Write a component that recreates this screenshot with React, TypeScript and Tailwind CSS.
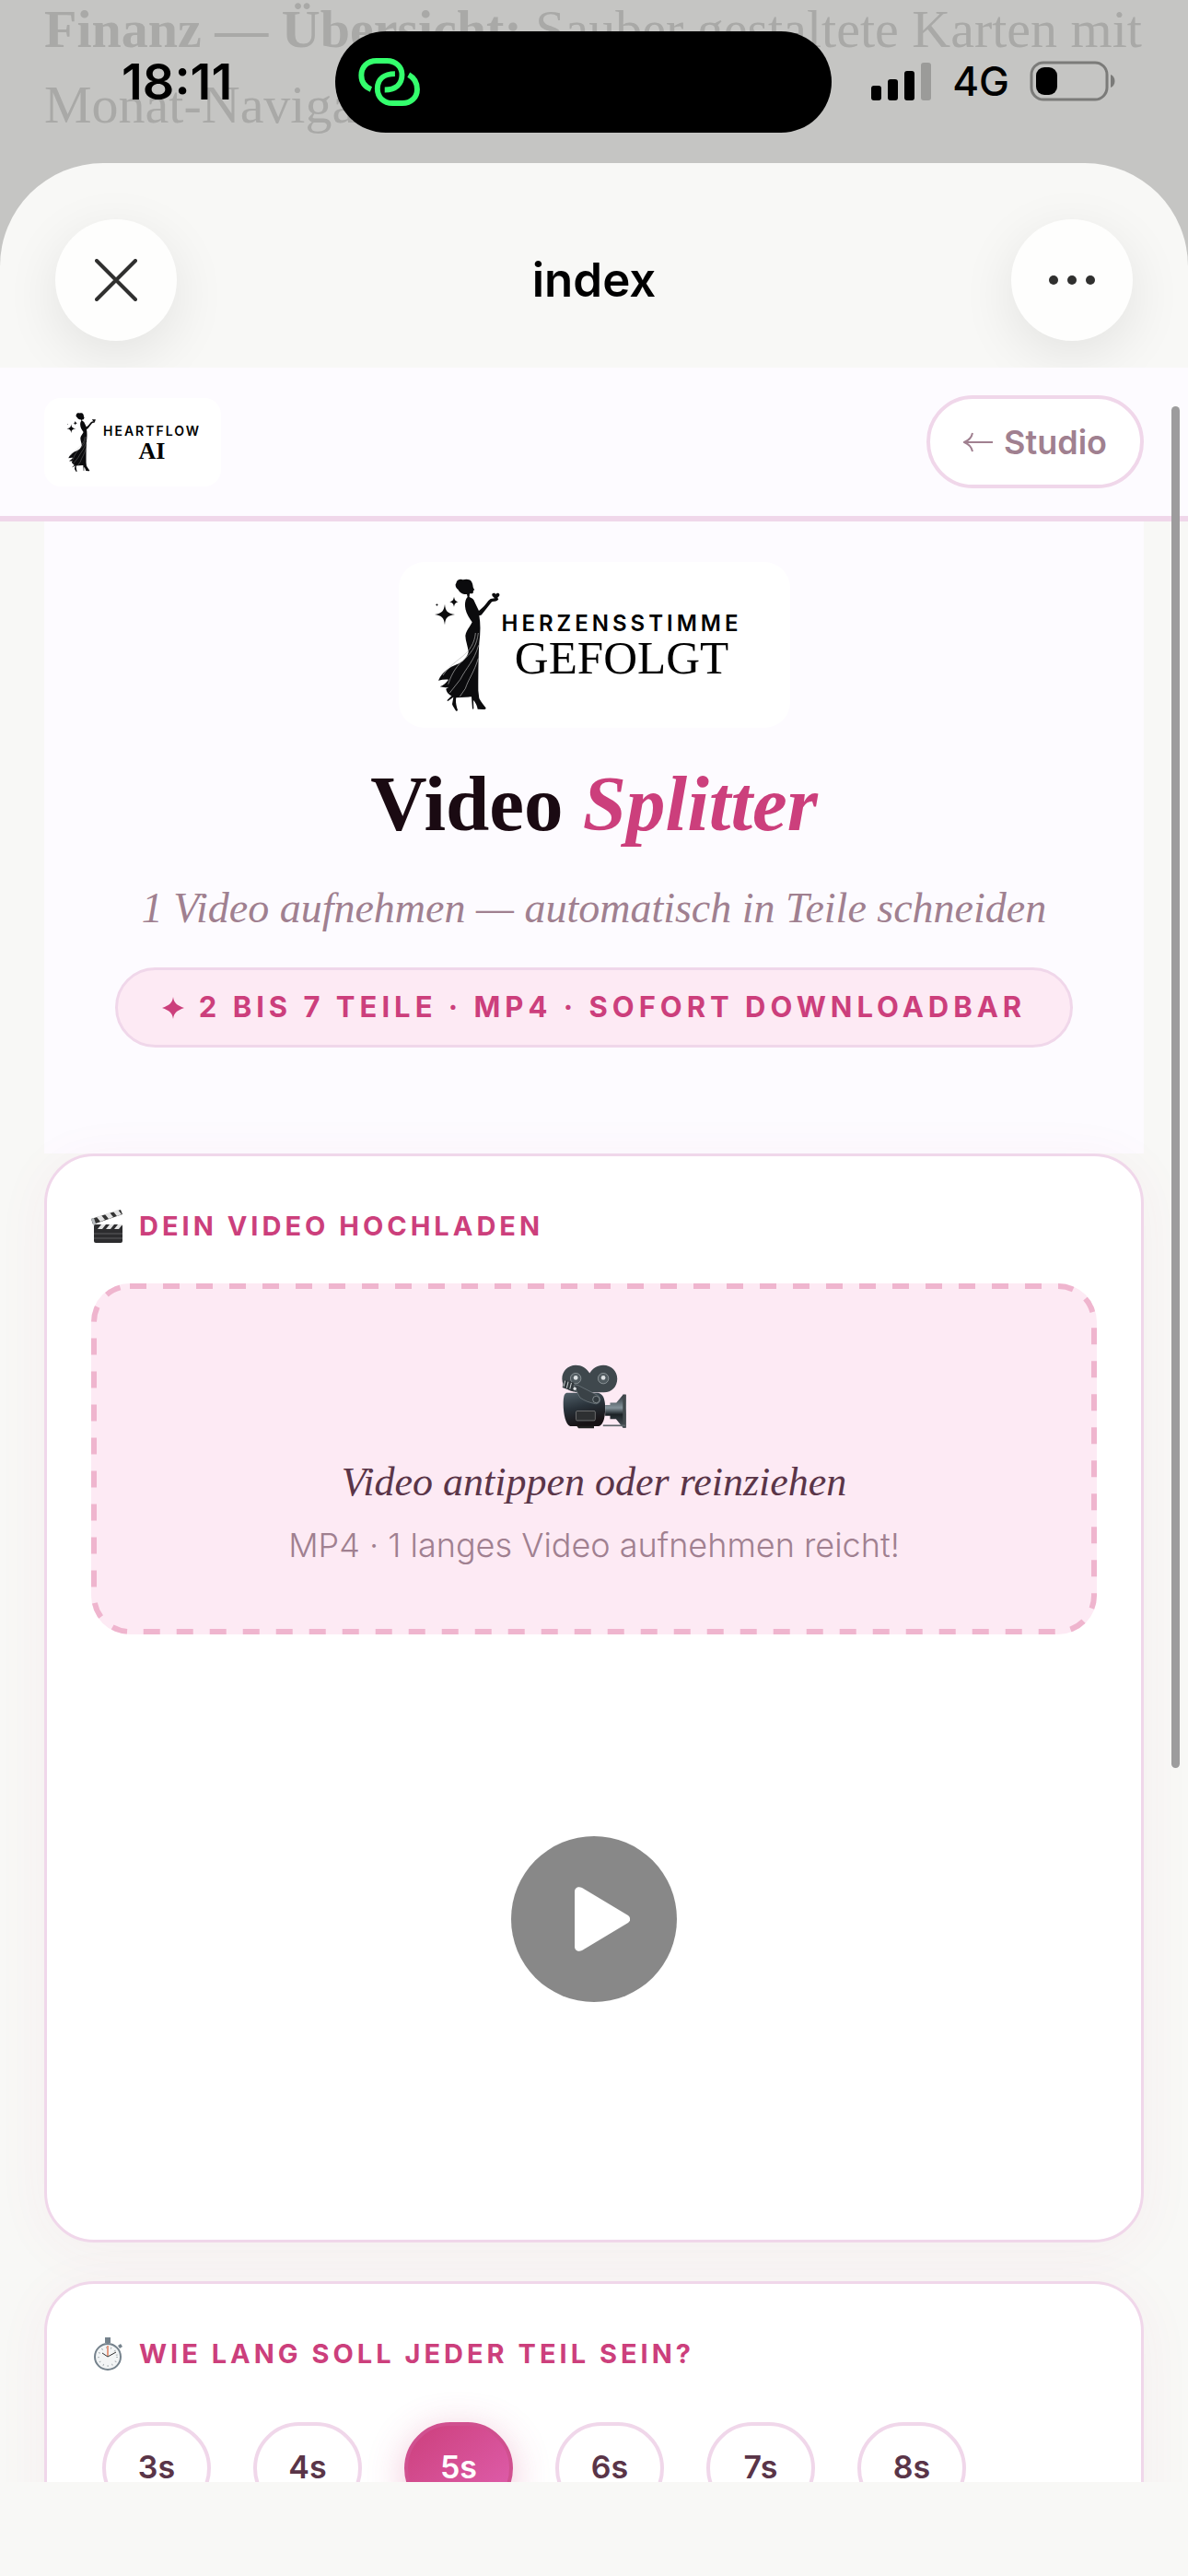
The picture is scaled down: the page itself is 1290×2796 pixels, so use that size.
import { useState } from 'react';
import { clsx } from 'clsx';

const DURATIONS = ['3s', '4s', '5s', '6s', '7s', '8s'];

const sans = "font-[Inter,'Open_Sans',sans-serif]";
const serif = "font-['Liberation_Serif',serif]";

function Lady({ className }: { className?: string }) {
  return (
    <svg viewBox="155 80 222 442" className={className} fill="#0b0b0d" aria-hidden="true">
      <path d="M228 100c2-11 13-15 22-11 11-4 25-2 29 8 4 7 3 13 5 19l4 6-4 2-1 8c-3 3-8 1-11 2l-1 11c9 3 15 8 18 18l13 27c12-9 22-20 31-33l7-6c4-1 14-3 22-4l4 5c-4 8-14 7-22 9l-32 40c-2 3-6 4-9 4 5 29 4 58 0 90-3 55-3 110-3 155l3 25c5 10 13 20 21 30 3 4-3 7-8 6l-18-1c-2-11-7-22-14-29l1 28-4 1-3-40-50 3c-3 13 1 28 5 40-1 4-4 5-7 1-4-8-9-12-11-20l4-23-18 13-3-2 15-15c-8-4-17-12-18-23l9-6c-10 3-20 1-29-1 12-5 21-13 28-23-10-1-22 0-33 3 12-28 38-44 59-52 22-9 33-22 39-40-1-18-10-37-10-54 2-17 15-28 22-44-10-14-22-32-23-52-1-12 2-24 8-30l-2-9c-14 1-25-7-29-16-5-2-9-9-8-16z" />
      <path d="M357 152c-4-5-14-10-12-17 3-5 10-3 12 1 3-5 10-5 12 0 2 7-8 12-12 16z" />
      <path d="M191 168c2 22 8 30 33 34-25 4-31 10-33 34-3-24-9-30-33-34 24-4 30-12 33-34zM221 144c2 11 5 15 15 17-10 2-13 6-15 16-2-10-5-14-16-16 11-2 14-6 16-17zM165 166l2 3 3 1-3 2-2 3-1-3-4-2 4-1z" />
      <g fill="none" stroke="#b9b9b9" strokeWidth="2">
        <path d="M291 262c-3 34-19 57-43 77-26 20-48 38-63 61" />
        <path d="M300 262c-4 36-18 60-42 82-28 25-43 46-56 85" />
        <path d="M301 302c-14 50-40 73-60 112l-34 43" />
        <path d="M300 345c-14 46-32 67-42 98l-18 26" />
      </g>
    </svg>
  );
}

function StatusBar() {
  return (
    <div className="relative h-[177px] overflow-hidden bg-[#c5c5c3]">
      <p className={clsx('absolute top-[-9px] left-12 w-[1230px] text-[58px] leading-[82px] text-[#a9a9a7]', serif)}>
        <b>Finanz — Übersicht:</b> Sauber gestaltete Karten mit Monat-Navigation
      </p>
      <div className="relative flex h-[176px] items-center justify-between pr-[78px] pl-[132px]">
        <span className={clsx('text-[54px] font-semibold text-black', sans)}>18:11</span>
        <div className="flex items-center gap-[22px]">
          <svg className="h-[42px] w-[66px]" viewBox="0 0 66 42" aria-hidden="true">
            <rect x="0" y="26" width="11" height="16" rx="3" />
            <rect x="18" y="19" width="11" height="23" rx="3" />
            <rect x="36" y="10" width="11" height="32" rx="3" />
            <rect x="54" y="1" width="11" height="41" rx="3" fill="#9b9b99" />
          </svg>
          <span className={clsx('text-[44px] font-medium text-black', sans)}>4G</span>
          <svg className="h-[44px] w-[94px]" viewBox="0 0 94 44" aria-hidden="true">
            <rect x="2" y="2" width="82" height="40" rx="13" fill="none" stroke="#7b7b79" strokeWidth="3" />
            <rect x="7" y="7" width="23" height="30" rx="9" />
            <path d="M88 15c6 2 6 12 0 14z" fill="#7b7b79" />
          </svg>
        </div>
      </div>
      <div className="absolute top-[34px] left-1/2 flex h-[110px] w-[539px] -translate-x-[281px] items-center rounded-full bg-black pl-6">
        <svg className="h-[54px] w-[70px]" viewBox="86 94 206 164" fill="none" stroke="#34ff6d" strokeWidth="18" aria-hidden="true">
          <path d="M128 200C108 192 96 176 96 154c0-28 20-48 50-48h34c30 0 50 20 50 46 0 30-20 50-57 50" />
          <path d="M207 149c-36 0-58 18-58 49 0 28 20 48 50 48h32c30 0 49-20 49-46 0-22-10-38-28-48" />
        </svg>
      </div>
    </div>
  );
}

function SheetHeader() {
  return (
    <div className="flex h-[222px] shrink-0 items-center justify-between px-[60px] pt-8">
      <button type="button" aria-label="Schließen" className="flex h-[132px] w-[132px] items-center justify-center rounded-full bg-[#fefefd] shadow-[0_16px_60px_rgba(0,0,0,0.09)]">
        <svg className="h-[46px] w-[46px]" viewBox="0 0 46 46" stroke="#30302f" strokeWidth="4" strokeLinecap="round" aria-hidden="true">
          <path d="M2 2l42 42M44 2L2 44" />
        </svg>
      </button>
      <h1 className={clsx('text-[51px] font-semibold text-black', sans)}>index</h1>
      <button type="button" aria-label="Mehr" className="flex h-[132px] w-[132px] items-center justify-center rounded-full bg-[#fefefd] shadow-[0_16px_60px_rgba(0,0,0,0.09)]">
        <svg className="h-[10px] w-[50px]" viewBox="0 0 50 10" fill="#30302f" aria-hidden="true">
          <circle cx="5" cy="5" r="5" />
          <circle cx="25" cy="5" r="5" />
          <circle cx="45" cy="5" r="5" />
        </svg>
      </button>
    </div>
  );
}

function TopNav() {
  return (
    <nav className="flex h-[167px] items-center justify-between border-b-6 border-[#f0d7ea] bg-[#fdfbff] px-12">
      <div className="flex h-24 w-48 items-center gap-[7px] rounded-[18px] bg-white pl-6">
        <Lady className="h-[66px] w-[33px]" />
        <div className="text-center text-black">
          <div className={clsx('text-[14px] leading-5 font-semibold tracking-[2px]', sans)}>HEARTFLOW</div>
          <div className={clsx('text-[26px] leading-6 font-bold', serif)}>AI</div>
        </div>
      </div>
      <a href="#studio" className={clsx('flex h-[101px] items-center gap-3 rounded-full border-4 border-[#f0d7ea] bg-white px-9 text-[36px] font-semibold text-[#a08090]', sans)}>
        <svg className="h-6 w-8" viewBox="0 0 32 24" fill="none" stroke="#a08090" strokeWidth="2" aria-hidden="true">
          <path d="M32 12H2M10 2C9 7 6 10 1 12c5 2 8 5 9 10" />
        </svg>
        Studio
      </a>
    </nav>
  );
}

function Hero() {
  return (
    <section className="flex h-[686px] flex-col items-center bg-[#fdfbff] pt-11">
      <div className="flex h-[180px] w-[425px] items-center rounded-[28px] bg-white pl-[38px]">
        <Lady className="h-[148px] w-[74px]" />
        <div className="text-center text-black">
          <div className={clsx('text-[24px] leading-7 font-semibold tracking-[4px]', sans)}>HERZENSSTIMME</div>
          <div className={clsx('text-[51px] leading-[46px]', serif)}>GEFOLGT</div>
        </div>
      </div>
      <h2 className={clsx('mt-8 text-[85px] leading-[100px] font-bold text-[#1a0a12]', serif)}>
        Video <em className="text-[#cc3f7c]">Splitter</em>
      </h2>
      <p className={clsx('mt-[34px] text-[46px] leading-[60px] text-[#a08090] italic', serif)}>
        1 Video aufnehmen — automatisch in Teile schneiden
      </p>
      <div className={clsx('mt-[34px] flex h-[87px] items-center gap-4 rounded-full border-3 border-[#f0d7ea] bg-[#fdeaf4] px-12 text-[31px] font-bold tracking-[5px] text-[#cc3f7c]', sans)}>
        <svg className="h-6 w-6" viewBox="0 0 24 24" fill="#cc3f7c" aria-hidden="true">
          <path d="M12 0c1 7 4 9 12 12-8 3-11 5-12 12C11 17 8 15 0 12 8 9 11 7 12 0z" />
        </svg>
        2 BIS 7 TEILE · MP4 · SOFORT DOWNLOADBAR
      </div>
    </section>
  );
}

function ClapperIcon() {
  return (
    <svg className="h-9 w-9" viewBox="0 0 36 36" aria-hidden="true">
      <path d="M0 10L32 0l2 5L2 16z" fill="#333" />
      <path d="M6 8l5-2 4 5-5 2zM15 5l5-2 4 5-5 2zM24 2l5-2 4 5-5 2z" fill="#e4e4e4" />
      <path d="M0 10l3-1 3 9H3z" fill="#b8bcbf" />
      <rect x="3" y="16" width="31" height="20" rx="2" fill="#2c2c2e" />
      <path d="M7 21l4-5h5l-4 5zM16 21l4-5h5l-4 5zM25 21l4-5h5l-4 5z" fill="#e4e4e4" />
      <path d="M3 26h31M3 31h31" stroke="#5c5c5e" />
    </svg>
  );
}

function StopwatchIcon() {
  return (
    <svg className="h-9 w-9" viewBox="0 0 36 36" aria-hidden="true">
      <path d="M15 0h6v6h-6zM29 9l3-2 2 3-3 2z" fill="#75828c" />
      <circle cx="18" cy="21" r="14" fill="#f3f5f6" stroke="#75828c" strokeWidth="2" />
      <circle cx="18" cy="21" r="10" fill="none" stroke="#a9afb3" strokeWidth="2" strokeDasharray="1 4" />
      <path d="M18 20V9" stroke="#e69a80" strokeWidth="2" />
      <path d="M12 17l6 4 9-5" fill="none" stroke="#333" />
    </svg>
  );
}

function CameraIcon() {
  return (
    <svg className="h-[70px] w-[70px]" viewBox="92 64 208 208" aria-hidden="true">
      <defs>
        <linearGradient id="body" x1="0" y1="0" x2="0.3" y2="1">
          <stop offset="0" stopColor="#53616a" />
          <stop offset="0.5" stopColor="#29323a" />
          <stop offset="1" stopColor="#171214" />
        </linearGradient>
        <linearGradient id="lens" x1="0" y1="0" x2="0" y2="1">
          <stop offset="0" stopColor="#2b3237" />
          <stop offset="0.4" stopColor="#84929a" />
          <stop offset="0.6" stopColor="#1c2226" />
          <stop offset="1" stopColor="#4b555b" />
        </linearGradient>
      </defs>
      <path d="M137 66c20 0 34 10 45 26 9-15 24-26 44-26 26 0 45 19 45 44s-17 44-43 44h-78c-32 0-57-15-57-44 0-25 19-44 44-44z" fill="#3f484d" />
      <path d="M108 155h100c18 3 24 20 24 50 0 34-8 58-23 58h-90c-14-4-22-38-22-72 0-20 2-34 11-36z" fill="url(#body)" />
      <path d="M140 262h56v8h-50z" fill="#20201f" />
      <g stroke="#a5adb0" strokeWidth="2" fill="#515b60">
        <circle cx="137" cy="109" r="17" />
        <circle cx="226" cy="109" r="17" />
      </g>
      <circle cx="137" cy="107" r="7" fill="#dde1e3" />
      <circle cx="226" cy="107" r="7" fill="#dde1e3" />
      <path d="M100 113l32 10-3 28-35-13z" fill="#30373b" />
      <path d="M103 116l-5 20M113 119l-5 21M123 123l-5 20" stroke="#cbd0d2" strokeWidth="3" />
      <path d="M130 132c5-4 14-2 20 2l57 29c14 10 9 29-6 28-20-4-34-9-50-20z" fill="#3a4247" stroke="#778187" strokeWidth="2" />
      <circle cx="203" cy="177" r="11" fill="#343c41" stroke="#a5adb0" strokeWidth="2" />
      <circle cx="134" cy="142" r="5" fill="#dde1e3" />
      <rect x="138" y="214" width="62" height="31" rx="4" fill="#2e3032" stroke="#8c8c8c" strokeWidth="2" />
      <path d="M232 195h16v-8h20l22-26h9v107h-9l-23-28h-19v-10h-16z" fill="url(#lens)" />
      <path d="M289 161h10v107h-10z" fill="#42494d" />
      <path d="M225 261h72" stroke="#5f676b" strokeWidth="5" />
    </svg>
  );
}

function UploadCard() {
  return (
    <section className="rounded-[54px] border-3 border-[#f0d7ea] bg-white px-12 pt-11 shadow-[0_8px_60px_rgba(204,63,124,0.05)]">
      <h3 className={clsx('flex h-16 items-center gap-4 text-[29px] font-bold tracking-[4px] text-[#cc3f7c]', sans)}>
        <ClapperIcon />
        DEIN VIDEO HOCHLADEN
      </h3>
      <button type="button" className="relative mt-[30px] flex h-[381px] w-full flex-col items-center rounded-[42px] bg-[#fdeaf4] pt-[88px]">
        <svg className="absolute inset-0 h-full w-full overflow-hidden rounded-[42px]" aria-hidden="true">
          <rect width="100%" height="100%" rx="42" fill="none" stroke="#efb5ce" strokeWidth="12" strokeDasharray="18 18" />
        </svg>
        <CameraIcon />
        <span className={clsx('mt-7 text-[44px] leading-[60px] text-[#5a3548] italic', serif)}>Video antippen oder reinziehen</span>
        <span className={clsx('mt-2 text-[36px] leading-[60px] font-light text-[#a08090]', sans)}>MP4 · 1 langes Video aufnehmen reicht!</span>
      </button>
      <div className="flex h-[657px] items-center justify-center pb-10">
        <button type="button" aria-label="Abspielen" className="flex h-[180px] w-[180px] items-center justify-center rounded-full bg-[#888] pl-4">
          <svg className="h-[70px] w-[62px]" viewBox="0 0 62 70" fill="#fff" aria-hidden="true">
            <path d="M2 5c0-4 4-6 8-4l50 30c3 2 3 6 0 8L10 69c-4 2-8 0-8-4z" />
          </svg>
        </button>
      </div>
    </section>
  );
}

function DurationCard() {
  const [selected, setSelected] = useState('5s');

  return (
    <section className="mt-[42px] rounded-[54px] border-3 border-[#f0d7ea] bg-white px-12 pt-11 pb-12 shadow-[0_8px_60px_rgba(204,63,124,0.05)]">
      <h3 className={clsx('flex h-16 items-center gap-4 text-[29px] font-bold tracking-[4px] text-[#cc3f7c]', sans)}>
        <StopwatchIcon />
        WIE LANG SOLL JEDER TEIL SEIN?
      </h3>
      <div className="mt-[42px] flex gap-[46px] pl-3">
        {DURATIONS.map((d) => (
          <button
            key={d}
            type="button"
            aria-pressed={d === selected}
            onClick={() => setSelected(d)}
            className={clsx(
              'h-[100px] w-[118px] rounded-full border-4 pb-1 text-[34px] font-semibold',
              sans,
              d === selected
                ? 'border-[#d0508f] bg-linear-to-br from-[#cc3f7c] to-[#e060b0] text-white shadow-[0_8px_40px_rgba(204,63,124,0.3)]'
                : 'border-[#f0d7ea] bg-white text-[#5a3548]'
            )}
          >
            {d}
          </button>
        ))}
      </div>
    </section>
  );
}

export default function App() {
  return (
    <div className="flex h-screen flex-col overflow-hidden bg-[#c5c5c3]">
      <StatusBar />
      <div className="relative flex min-h-0 flex-1 flex-col overflow-hidden rounded-t-[112px] bg-[#f8f8f6] pb-[102px]">
        <SheetHeader />
        <main className="min-h-0 flex-1 overflow-hidden">
          <TopNav />
          <div className="px-12">
            <Hero />
            <UploadCard />
            <DurationCard />
          </div>
        </main>
        <div className="absolute top-[264px] right-[9px] h-[1478px] w-[9px] rounded-full bg-[#9d9c9d]" />
      </div>
    </div>
  );
}
